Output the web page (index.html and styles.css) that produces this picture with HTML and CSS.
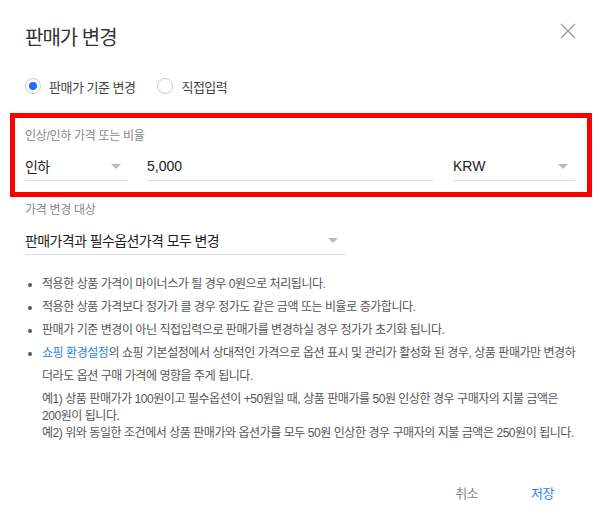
FILE: index.html
```html
<!DOCTYPE html>
<html lang="ko">
<head>
<meta charset="utf-8">
<link rel="stylesheet" href="styles.css">
</head>
<body>
<div class="dialog">
  <div class="header">
    <h1 class="title">판매가 변경</h1>
    <button class="close" aria-label="닫기">
      <svg width="16" height="16" viewBox="0 0 16 16"><path d="M1 1L15 15M15 1L1 15" stroke="#9a9a9a" stroke-width="1.3" fill="none"/></svg>
    </button>
  </div>

  <div class="radios">
    <label class="radio"><span class="dot checked"></span>판매가 기준 변경</label>
    <label class="radio"><span class="dot"></span>직접입력</label>
  </div>

  <div class="highlight">
    <div class="field-label">인상/인하 가격 또는 비율</div>
    <div class="row">
      <div class="select sel-dir"><span>인하</span><span class="arrow"></span></div>
      <div class="input sel-amount"><span class="latin">5,000</span></div>
      <div class="select sel-cur"><span class="latin">KRW</span><span class="arrow"></span></div>
    </div>
  </div>

  <div class="target">
    <div class="field-label">가격 변경 대상</div>
    <div class="select sel-target"><span>판매가격과 필수옵션가격 모두 변경</span><span class="arrow"></span></div>
  </div>

  <ul class="notes">
    <li>적용한 상품 가격이 마이너스가 될 경우 0원으로 처리됩니다.</li>
    <li>적용한 상품 가격보다 정가가 클 경우 정가도 같은 금액 또는 비율로 증가합니다.</li>
    <li>판매가 기준 변경이 아닌 직접입력으로 판매가를 변경하실 경우 정가가 초기화 됩니다.</li>
    <li><a class="link" href="#">쇼핑 환경설정</a>의 쇼핑 기본설정에서 상대적인 가격으로 옵션 표시 및 관리가 활성화 된 경우, 상품 판매가만 변경하더라도 옵션 구매 가격에 영향을 주게 됩니다.</li>
  </ul>
  <p class="examples">예1) 상품 판매가가 100원이고 필수옵션이 +50원일 때, 상품 판매가를 50원 인상한 경우 구매자의 지불 금액은 <span class="nw">200원이</span> 됩니다.<br>예2) 위와 동일한 조건에서 상품 판매가와 옵션가를 모두 50원 인상한 경우 구매자의 지불 금액은 250원이 됩니다.</p>

  <div class="footer">
    <button class="btn cancel">취소</button>
    <button class="btn save">저장</button>
  </div>
</div>
</body>
</html>
```

FILE: styles.css
```css
* { box-sizing: border-box; }
html, body { margin: 0; padding: 0; background: #fff; }
body {
  font-family: "Liberation Sans", "Noto Sans CJK KR", sans-serif;
  color: #333;
  width: 600px;
  height: 520px;
  overflow: hidden;
}
.dialog { width: 600px; padding: 0; }
.header {
  display: flex;
  justify-content: space-between;
  align-items: flex-start;
  padding: 26px 24px 0 25px;
}
.title {
  margin: 0;
  font-size: 20px;
  line-height: 24px;
  font-weight: 400;
  color: #333;
  letter-spacing: -1px;
}
.close {
  border: 0; background: none; padding: 0; margin: -3px 0 0 0;
  width: 16px; height: 16px; display: block;
}
.close svg { display: block; }
.radios {
  display: flex;
  gap: 22px;
  padding: 0 25px;
  margin-top: 26px;
  height: 20px;
  align-items: center;
}
.radio {
  display: flex;
  align-items: center;
  gap: 8px;
  font-size: 13px;
  color: #444;
  letter-spacing: -0.5px;
}
.dot {
  width: 16px; height: 16px;
  border: 1px solid #ccc;
  border-radius: 50%;
  display: flex; align-items: center; justify-content: center;
}
.dot.checked::after {
  content: "";
  width: 8px; height: 8px; border-radius: 50%;
  background: #1f6ff2;
}
.highlight {
  margin: 17px 8px 0 10px;
  border: 5px solid #ff0000;
  padding: 10px 12px 11px 10px;
}
.field-label {
  font-size: 12px;
  line-height: 16px;
  color: #888;
  letter-spacing: -0.3px;
}
.row {
  display: flex;
  margin-top: 8px;
}
.select, .input {
  height: 29px;
  border-bottom: 1px solid #ddd;
  display: flex;
  align-items: center;
  justify-content: space-between;
  font-size: 14px;
  color: #222;
  letter-spacing: -0.6px;
}
.latin { font-family: "Liberation Sans", sans-serif; font-size: 14px; letter-spacing: 0; }
.arrow {
  width: 0; height: 0;
  border-left: 5px solid transparent;
  border-right: 5px solid transparent;
  border-top: 5px solid #bbb;
  margin-right: 7px;
}
.sel-dir { width: 103px; }
.sel-amount { width: 286px; margin-left: 19px; }
.sel-cur { width: 122px; margin-left: 20px; }
.target {
  padding: 0 25px;
  margin-top: 5px;
}
.sel-target { width: 320px; margin-top: 8px; }
.notes {
  margin: 18px 0 0 0;
  padding: 0 20px 0 42px;
  font-size: 12px;
  line-height: 23px;
  color: #555;
  letter-spacing: -0.45px;
}
.notes li::marker { color: #555; }
.link { color: #2a7ff0; text-decoration: none; }
.examples {
  margin: 3px 0 0 0;
  padding: 0 20px 0 42px;
  font-size: 12px;
  line-height: 17px;
  color: #555;
  letter-spacing: -0.45px;
}
.nw { white-space: nowrap; }
.footer {
  display: flex;
  justify-content: flex-end;
  padding: 0 26px 0 0;
  margin-top: 38px;
}
.btn {
  border: 0; background: none;
  font-family: "Liberation Sans", "Noto Sans CJK KR", sans-serif;
  font-size: 13px;
  line-height: 16px;
  padding: 6px 20px;
  letter-spacing: -0.5px;
}
.cancel { color: #888; margin-right: 13px; }
.save { color: #2a7ff0; }
```
